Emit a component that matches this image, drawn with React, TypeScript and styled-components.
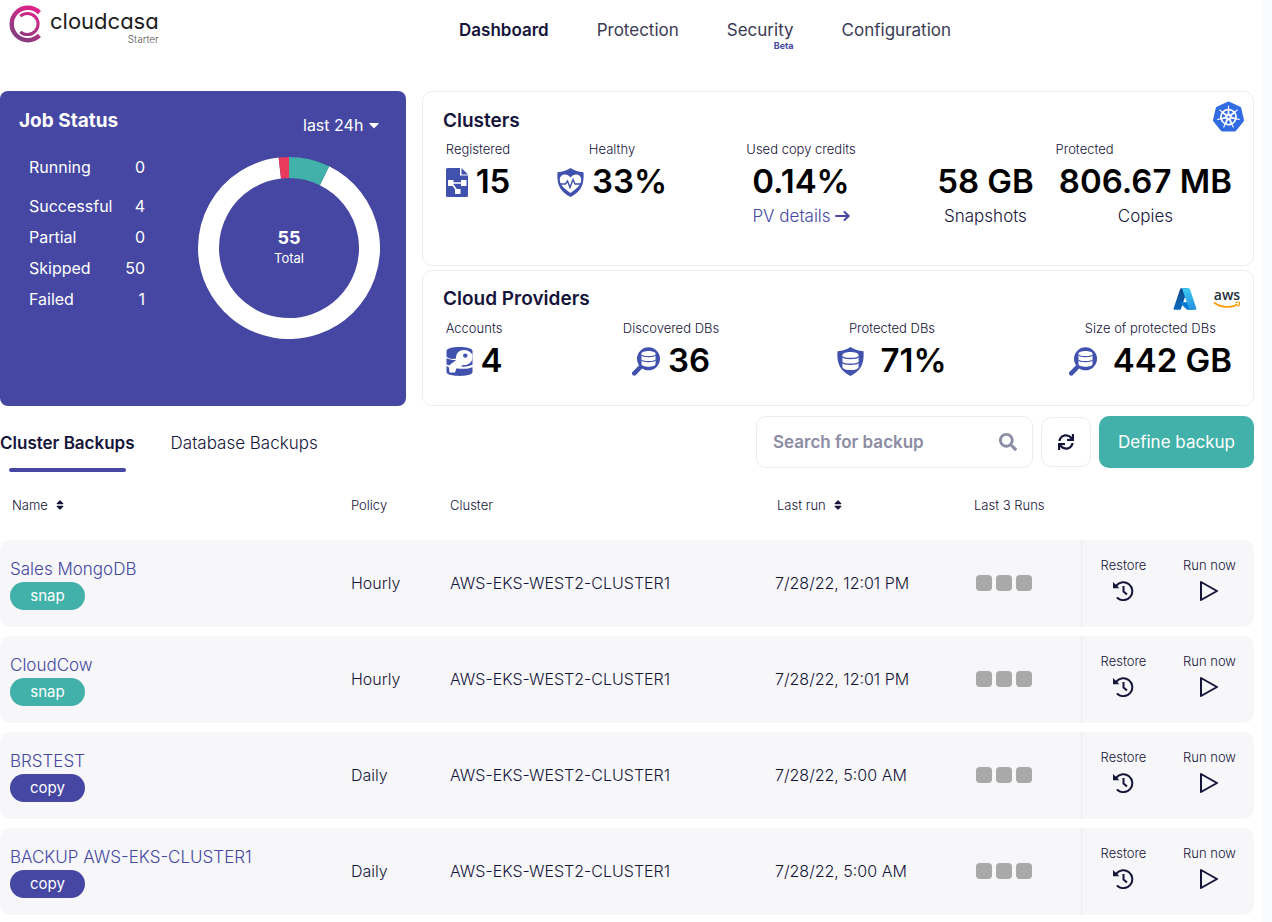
import React from "react";
import styled, { createGlobalStyle } from "styled-components";
import { FaCaretDown, FaSearch, FaSort, FaSync } from "react-icons/fa";
import { SiKubernetes } from "react-icons/si";

const colors = {
  indigo: "#4547a3",
  icon: "#4151ae",
  teal: "#41b1a9",
  red: "#ea3a5b",
  ink: "#15143a",
  muted: "#8c8ca4",
  line: "#ededed",
  row: "#f7f7f9",
};

const GlobalStyle = createGlobalStyle`
  * { box-sizing: border-box; }
  body {
    margin: 0;
    background: #fafbff;
    color: ${colors.ink};
    font-family: Inter, "Liberation Sans", sans-serif;
    font-size: 16px;
    font-weight: 300;
  }
  button, input, select { font: inherit; color: inherit; }
  button { cursor: pointer; }
  a { color: inherit; text-decoration: none; }
  h2, dl, dd, p { margin: 0; }
`;

const Page = styled.div`
  min-height: 100vh;
  margin-right: 10px;
  padding-right: 8px;
  background: #fff;
`;

const Main = styled.main`
  display: flow-root;
`;

/* ---------- header ---------- */

const Header = styled.header`
  display: grid;
  grid-template-columns: 459px 1fr;
  height: 91px;
`;

const Brand = styled.a`
  display: flex;
  align-items: flex-start;
  gap: 9px;
  padding: 5px 0 0 9px;
`;

const BrandText = styled.span`
  display: flex;
  flex-direction: column;
  align-items: flex-end;
  padding-top: 4px;
`;

const Wordmark = styled.span`
  font-size: 22px;
  line-height: 24px;
  font-weight: 400;
  font-feature-settings: "cv11";
  color: #1c1c1c;
`;

const Plan = styled.span`
  font-size: 10px;
  line-height: 12px;
  color: #555;
`;

const Nav = styled.nav`
  display: flex;
  align-items: flex-start;
  gap: 48px;
  padding-top: 18px;
  font-size: 17px;
`;

const NavLink = styled.a<{ $active?: boolean }>`
  position: relative;
  line-height: 24px;
  font-weight: ${(p) => (p.$active ? 600 : 400)};
  color: ${(p) => (p.$active ? colors.ink : "#3a3a55")};
`;

const Beta = styled.span`
  position: absolute;
  right: 0;
  top: 22px;
  font-size: 9px;
  line-height: 12px;
  font-weight: 700;
  color: ${colors.indigo};
`;

/* ---------- summary ---------- */

const Summary = styled.section`
  display: grid;
  grid-template-columns: 406fr 832fr;
  gap: 16px;
`;

const JobCard = styled.section`
  background: ${colors.indigo};
  color: #fff;
  border-radius: 8px;
`;

const JobHead = styled.div`
  display: flex;
  justify-content: space-between;
  height: 56px;
  padding: 18px 24px 0 19px;
`;

const JobTitle = styled.h2`
  font-size: 19px;
  line-height: 24px;
  font-weight: 700;
`;

const Period = styled.label`
  display: flex;
  align-items: center;
  gap: 2px;
  height: 24px;
  margin-top: 4px;
`;

const PeriodSelect = styled.select`
  appearance: none;
  padding: 0;
  border: 0;
  background: transparent;
  font-weight: 400;
`;

const JobBody = styled.div`
  display: flex;
  justify-content: space-between;
  padding: 5px 26px 0 29px;
`;

const JobList = styled.dl`
  width: 116px;
  font-weight: 400;
  line-height: 31px;
`;

const JobRow = styled.div<{ $spaced?: boolean }>`
  display: flex;
  justify-content: space-between;
  margin-bottom: ${(p) => (p.$spaced ? 8 : 0)}px;
`;

const Donut = styled.svg`
  width: 182px;
  height: 182px;
  margin-top: 5px;
`;

const Stats = styled.div`
  display: grid;
  gap: 4px;
`;

const Card = styled.section`
  border: 1px solid ${colors.line};
  border-radius: 10px;
  background: #fff;
`;

const CardHead = styled.div<{ $center?: boolean }>`
  display: flex;
  justify-content: space-between;
  align-items: ${(p) => (p.$center ? "center" : "flex-start")};
  margin-top: 9px;
  height: 38px;
  padding: 0 ${(p) => (p.$center ? 12 : 9)}px 0 20px;
`;

const CardTitle = styled.h2`
  font-size: 19px;
  line-height: 40px;
  font-weight: 600;
`;

const Logos = styled.div`
  display: flex;
  align-items: center;
  gap: 16px;
`;

const Metrics = styled.div<{ $cols: string; $bottom: number }>`
  display: grid;
  grid-template-columns: ${(p) => p.$cols};
  padding: 1px 21px ${(p) => p.$bottom}px 13px;
`;

const Metric = styled.div<{ $end?: boolean }>`
  display: flex;
  flex-direction: column;
  align-items: center;
  justify-self: ${(p) => (p.$end ? "end" : "center")};
`;

const MetricLabel = styled.span`
  font-size: 13px;
  line-height: 18px;
  white-space: nowrap;
`;

const MetricValue = styled.span<{ $gap?: number }>`
  display: flex;
  align-items: center;
  gap: ${(p) => p.$gap ?? 8}px;
  margin-top: 4px;
  font-size: 33px;
  line-height: 38px;
  font-weight: 600;
  color: #000;
  white-space: nowrap;
  svg {
    margin-top: 3px;
  }
`;

const MetricNote = styled.span`
  margin-top: 4px;
  font-size: 17px;
  line-height: 24px;
`;

const DetailsLink = styled.a`
  display: flex;
  align-items: center;
  gap: 4px;
  margin-top: 4px;
  font-size: 17px;
  line-height: 24px;
  color: ${colors.indigo};
`;

const Pair = styled.div`
  display: flex;
  gap: 25px;
`;

const PairItem = styled.div`
  display: flex;
  flex-direction: column;
  align-items: center;
`;

/* ---------- toolbar ---------- */

const Toolbar = styled.div`
  display: flex;
  justify-content: space-between;
  margin-top: 10px;
  font-size: 17px;
`;

const Tabs = styled.div`
  display: flex;
  gap: 36px;
`;

const Tab = styled.button<{ $active?: boolean }>`
  display: flex;
  flex-direction: column;
  padding: 2px 0 0;
  border: 0;
  background: none;
  line-height: 50px;
  font-weight: ${(p) => (p.$active ? 600 : 300)};
  &::after {
    content: "";
    align-self: stretch;
    height: 4px;
    margin: 0 9px;
    border-radius: 2px;
    background: ${(p) => (p.$active ? colors.indigo : "transparent")};
  }
`;

const Tools = styled.div`
  display: flex;
  align-items: center;
  gap: 8px;
  height: 52px;
`;

const SearchBox = styled.label`
  display: flex;
  align-items: center;
  width: 277px;
  height: 52px;
  padding: 0 15px 0 16px;
  border: 1px solid ${colors.line};
  border-radius: 10px;
  color: ${colors.muted};
`;

const SearchInput = styled.input`
  flex: 1;
  min-width: 0;
  padding: 0;
  border: 0;
  outline: 0;
  background: none;
  font-weight: 600;
  &::placeholder {
    color: ${colors.muted};
    opacity: 1;
  }
`;

const RefreshButton = styled.button`
  display: grid;
  place-items: center;
  width: 50px;
  height: 50px;
  padding: 0;
  border: 1px solid ${colors.line};
  border-radius: 10px;
  background: #fff;
`;

const DefineButton = styled.button`
  width: 155px;
  height: 52px;
  padding: 0;
  border: 0;
  border-radius: 10px;
  background: ${colors.teal};
  color: #fff;
  font-weight: 400;
`;

/* ---------- table ---------- */

const Table = styled.table`
  width: 100%;
  margin-bottom: -9px;
  table-layout: fixed;
  border-collapse: separate;
  border-spacing: 0 9px;
`;

const Th = styled.th<{ $width?: number }>`
  width: ${(p) => (p.$width ? `${p.$width}px` : "auto")};
  height: 50px;
  padding: 0 0 2px 10px;
  text-align: left;
  font-size: 13px;
  font-weight: 300;
`;

const SortButton = styled.button`
  display: flex;
  align-items: center;
  gap: 6px;
  padding: 0 2px;
  border: 0;
  background: none;
`;

const Td = styled.td`
  height: 87px;
  padding: 0 0 2px 10px;
  background: ${colors.row};
  white-space: nowrap;
  &:first-child {
    border-radius: 10px 0 0 10px;
  }
`;

const ActionTd = styled.td<{ $divided?: boolean }>`
  padding: 0 0 12px;
  background: ${colors.row};
  border-left: ${(p) => (p.$divided ? "1px solid #ececf0" : "0")};
  text-align: center;
  &:last-child {
    border-radius: 0 10px 10px 0;
  }
`;

const NameLink = styled.a`
  display: block;
  font-size: 17px;
  line-height: 26px;
  color: ${colors.indigo};
`;

const Tag = styled.span<{ $kind: "snap" | "copy" }>`
  display: inline-block;
  vertical-align: top;
  min-width: 75px;
  padding: 0 20px;
  border-radius: 14px;
  background: ${(p) => (p.$kind === "snap" ? colors.teal : colors.indigo)};
  color: #fff;
  font-size: 15px;
  line-height: 28px;
  font-weight: 400;
  text-align: center;
`;

const Runs = styled.span`
  display: flex;
  gap: 4px;
  padding-left: 2px;
`;

const Run = styled.i`
  width: 16px;
  height: 16px;
  border-radius: 4px;
  background: #a9a9a9;
`;

const ActionButton = styled.button`
  display: inline-flex;
  flex-direction: column;
  align-items: center;
  gap: 7px;
  padding: 0;
  border: 0;
  background: none;
  font-size: 13px;
  line-height: 18px;
  white-space: nowrap;
`;

/* ---------- drawings ---------- */

const BrandMark = () => (
  <svg width="32" height="38" viewBox="0 0 32 38" fill="none">
    <defs>
      <linearGradient id="brand" x1="28" y1="2" x2="6" y2="36" gradientUnits="userSpaceOnUse">
        <stop offset="0" stopColor="#e4208c" />
        <stop offset="0.45" stopColor="#b92f84" />
        <stop offset="1" stopColor="#7b4080" />
      </linearGradient>
    </defs>
    <path d="M30.4 7.6A16.2 16.2 0 1 0 30.4 30.4" stroke="url(#brand)" strokeWidth="4.400" />
    <path d="M11.300 11.200A10.600 10.600 0 1 1 11.300 26.800" stroke="url(#brand)" strokeWidth="3" />
  </svg>
);

const FileDiagramIcon = () => (
  <svg width="22" height="29" viewBox="0 0 22 29">
    <path d="M0 1.5Q0 0 1.5 0H14V7.5H22V27.5Q22 29 20.5 29H1.5Q0 29 0 27.5Z" fill={colors.icon} />
    <path d="M15.5 0L22 6.4H15.5Z" fill={colors.icon} />
    <g fill="#fff">
      <rect x="2" y="12" width="5.5" height="6" />
      <rect x="15" y="12" width="5.5" height="6" />
      <rect x="9" y="21" width="5.5" height="5" />
    </g>
    <path d="M7 15H15M7 17L10.5 22" stroke="#fff" strokeWidth="1.6" />
  </svg>
);

const shieldPath = "M13.500 0C16.500 2.300 21 3.800 26.500 4.200C27.300 15 25 23.500 13.500 29C2 23.500-.300 15 .500 4.200C6 3.800 10.500 2.300 13.500 0Z";

const HeartShieldIcon = () => (
  <svg width="27" height="29" viewBox="0 0 27 29">
    <path d={shieldPath} fill={colors.icon} />
    <path
      d="M13.5 25C8 21 2.800 17.500 2.800 11.500C2.800 6 10 4.500 13.500 9.500C17 4.500 24.200 6 24.200 11.500C24.200 17.500 19 21 13.500 25Z"
      fill="#fff"
    />
    <path d="M2 16H8.500L10.500 13L13 19.500L16 11.500L18 16H25" fill="none" stroke={colors.icon} strokeWidth="1.4" />
  </svg>
);

const Cylinder = ({ x, y }: { x: number; y: number }) => (
  <g transform={`translate(${x} ${y})`}>
    <path d="M0 2.800C0 -.800 14 -.800 14 2.800V13.200C14 16.800 0 16.800 0 13.200Z" fill="#fff" />
    <path
      d="M0 4.200C1.500 6.400 12.500 6.400 14 4.200M0 9.200C1.500 11.400 12.500 11.400 14 9.200"
      fill="none"
      stroke={colors.icon}
      strokeWidth="1.2"
    />
  </g>
);

const DbShieldIcon = () => (
  <svg width="27" height="29" viewBox="0 0 27 29">
    <path d={shieldPath} fill={colors.icon} />
    <g transform="translate(-2 -1.500) scale(1.150)">
      <Cylinder x={6.5} y={5.5} />
    </g>
  </svg>
);

const DbSearchIcon = () => (
  <svg width="28" height="29" viewBox="0 0 28 29">
    <path d="M8 20.500L2.300 26.300" stroke={colors.icon} strokeWidth="4.600" strokeLinecap="round" />
    <circle cx="16.500" cy="11.800" r="11.500" fill={colors.icon} />
    <Cylinder x={9.5} y={3.8} />
  </svg>
);

const DbKeyIcon = () => (
  <svg width="27" height="29" viewBox="0 0 27 29">
    <path d="M.500 4C.500-1.200 26.500-1.200 26.500 4V25C26.500 30.200 .500 30.200 .500 25Z" fill={colors.icon} />
    <path
      d="M0 9.500C3 12 7.500 12.500 10 11.500C9.500 6 14 2.700 18.500 3C22.500 3.300 25.500 5.500 26.500 8V10C26.500 15.500 22 18.500 17.500 18C16 18.300 15.500 18.500 15 19.500C19.500 20 24 19 27 17.500V20C22.500 22 15.500 22.200 10.500 21.300L9 25.500H3.500L3 20.500L0 18.500V17.300L3 18.500L10.500 12.800C6.500 13.500 2.500 12.500 0 10.800Z"
      fill="#fff"
    />
    <circle cx="19.300" cy="8.600" r="2.200" fill={colors.icon} />
  </svg>
);

const AzureLogo = () => (
  <svg width="24" height="24" viewBox="2 2 92 92">
    <defs>
      <linearGradient id="azDark" x1="46" y1="10" x2="20" y2="88" gradientUnits="userSpaceOnUse">
        <stop offset="0" stopColor="#114a8b" />
        <stop offset="1" stopColor="#0669bc" />
      </linearGradient>
      <linearGradient id="azLight" x1="48" y1="8" x2="76" y2="88" gradientUnits="userSpaceOnUse">
        <stop offset="0" stopColor="#3ccbf4" />
        <stop offset="1" stopColor="#2892df" />
      </linearGradient>
    </defs>
    <path fill="url(#azDark)" d="M33.338 6.544h26.038l-27.030 80.087a4.152 4.152 0 0 1-3.933 2.824H8.149a4.145 4.145 0 0 1-3.928-5.470L29.404 9.368a4.152 4.152 0 0 1 3.934-2.825z" />
    <path fill="#0078d4" d="M71.175 60.261h-41.290a1.911 1.911 0 0 0-1.305 3.309l26.532 24.764a4.171 4.171 0 0 0 2.846 1.121h23.380z" />
    <path fill="url(#azLight)" d="M66.595 9.364a4.145 4.145 0 0 0-3.928-2.820H33.648a4.146 4.146 0 0 1 3.928 2.820l25.184 74.620a4.146 4.146 0 0 1-3.928 5.472h29.020a4.146 4.146 0 0 0 3.927-5.472z" />
  </svg>
);

const AwsLogo = () => (
  <svg width="28" height="32" viewBox="0 0 28 32">
    <text x="14" y="17" textAnchor="middle" fontSize="14" fontWeight="600" fontFamily="Open Sans, sans-serif" fill="#252f3e">
      aws
    </text>
    <path d="M1 19.500C8 25 18 25 24.500 21.500" fill="none" stroke="#ff9900" strokeWidth="1.800" />
    <path d="M22.500 19.700C24 19 26 19 26.500 19.500C26.800 20.500 26 22.500 25 23.500" fill="none" stroke="#ff9900" strokeWidth="1.200" />
  </svg>
);

const ArrowIcon = () => (
  <svg width="15" height="12" viewBox="0 0 15 12" fill="none" stroke="currentColor" strokeWidth="2" strokeLinecap="round" strokeLinejoin="round">
    <path d="M1 6H13.500M9.500 2L13.700 6L9.500 10" />
  </svg>
);

const RestoreIcon = () => (
  <svg width="22" height="20" viewBox="0 0 22 20" fill="none" stroke={colors.ink} strokeWidth="2">
    <path d="M4.300 4.500A9 9 0 1 1 5.500 17" strokeLinecap="round" />
    <path d="M11.500 5V10.500L15 13.500" />
    <path d="M1 1V7.300H7.300L5.500 5.300L3 3Z" fill={colors.ink} stroke="none" />
  </svg>
);

const PlayIcon = () => (
  <svg width="20" height="20" viewBox="0 0 20 20" fill="none" stroke={colors.ink} strokeWidth="2" strokeLinejoin="round">
    <path d="M2 1L18 10L2 19Z" />
  </svg>
);

const ringArc = (from: number, to: number) => {
  const point = (share: number) => {
    const a = share * 2 * Math.PI;
    return `${91 + 80.5 * Math.sin(a)} ${91 - 80.5 * Math.cos(a)}`;
  };
  return `M${point(from)}A80.5 80.5 0 ${to - from > 0.5 ? 1 : 0} 1 ${point(to)}`;
};

/* ---------- data ---------- */

const jobs: [string, number][] = [
  ["Running", 0],
  ["Successful", 4],
  ["Partial", 0],
  ["Skipped", 50],
  ["Failed", 1],
];

type Backup = { name: string; kind: "snap" | "copy"; policy: string; cluster: string; lastRun: string };

const backups: Backup[] = [
  { name: "Sales MongoDB", kind: "snap", policy: "Hourly", cluster: "AWS-EKS-WEST2-CLUSTER1", lastRun: "7/28/22, 12:01 PM" },
  { name: "CloudCow", kind: "snap", policy: "Hourly", cluster: "AWS-EKS-WEST2-CLUSTER1", lastRun: "7/28/22, 12:01 PM" },
  { name: "BRSTEST", kind: "copy", policy: "Daily", cluster: "AWS-EKS-WEST2-CLUSTER1", lastRun: "7/28/22, 5:00 AM" },
  { name: "BACKUP AWS-EKS-CLUSTER1", kind: "copy", policy: "Daily", cluster: "AWS-EKS-WEST2-CLUSTER1", lastRun: "7/28/22, 5:00 AM" },
];

export default function App() {
  return (
    <>
      <GlobalStyle />
      <Page>
        <Header>
          <Brand href="#">
            <BrandMark />
            <BrandText>
              <Wordmark>cloudcasa</Wordmark>
              <Plan>Starter</Plan>
            </BrandText>
          </Brand>
          <Nav>
            <NavLink href="#dashboard" $active>Dashboard</NavLink>
            <NavLink href="#protection">Protection</NavLink>
            <NavLink href="#security">
              Security<Beta>Beta</Beta>
            </NavLink>
            <NavLink href="#configuration">Configuration</NavLink>
          </Nav>
        </Header>

        <Main>
          <Summary>
            <JobCard>
              <JobHead>
                <JobTitle>Job Status</JobTitle>
                <Period>
                  <PeriodSelect aria-label="Period">
                    <option>last 24h</option>
                  </PeriodSelect>
                  <FaCaretDown size={16} />
                </Period>
              </JobHead>
              <JobBody>
                <JobList>
                  {jobs.map(([label, count]) => (
                    <JobRow key={label} $spaced={label === "Running"}>
                      <dt>{label}</dt>
                      <dd>{count}</dd>
                    </JobRow>
                  ))}
                </JobList>
                <Donut viewBox="0 0 182 182" fill="none" strokeWidth="21">
                  <path d={ringArc(4 / 55, 54 / 55)} stroke="#fff" />
                  <path d={ringArc(0, 4 / 55)} stroke={colors.teal} />
                  <path d={ringArc(54 / 55, 1)} stroke={colors.red} />
                  <text x="91" y="87" textAnchor="middle" fontSize="18" fontWeight="700" fill="#fff">55</text>
                  <text x="91" y="106" textAnchor="middle" fontSize="13" fontWeight="400" fill="#fff">Total</text>
                </Donut>
              </JobBody>
            </JobCard>

            <Stats>
              <Card>
                <CardHead>
                  <CardTitle>Clusters</CardTitle>
                  <SiKubernetes size={31} color="#326ce5" />
                </CardHead>
                <Metrics $cols="84fr 184fr 194fr 334fr" $bottom={37}>
                  <Metric>
                    <MetricLabel>Registered</MetricLabel>
                    <MetricValue><FileDiagramIcon />15</MetricValue>
                  </Metric>
                  <Metric>
                    <MetricLabel>Healthy</MetricLabel>
                    <MetricValue><HeartShieldIcon />33%</MetricValue>
                  </Metric>
                  <Metric>
                    <MetricLabel>Used copy credits</MetricLabel>
                    <MetricValue>0.14%</MetricValue>
                    <DetailsLink href="#pv">PV details<ArrowIcon /></DetailsLink>
                  </Metric>
                  <Metric $end>
                    <MetricLabel>Protected</MetricLabel>
                    <Pair>
                      <PairItem>
                        <MetricValue>58 GB</MetricValue>
                        <MetricNote>Snapshots</MetricNote>
                      </PairItem>
                      <PairItem>
                        <MetricValue>806.67 MB</MetricValue>
                        <MetricNote>Copies</MetricNote>
                      </PairItem>
                    </Pair>
                  </Metric>
                </Metrics>
              </Card>

              <Card>
                <CardHead $center>
                  <CardTitle>Cloud Providers</CardTitle>
                  <Logos><AzureLogo /><AwsLogo /></Logos>
                </CardHead>
                <Metrics $cols="76fr 318fr 124fr 278fr" $bottom={26}>
                  <Metric>
                    <MetricLabel>Accounts</MetricLabel>
                    <MetricValue><DbKeyIcon />4</MetricValue>
                  </Metric>
                  <Metric>
                    <MetricLabel>Discovered DBs</MetricLabel>
                    <MetricValue><DbSearchIcon />36</MetricValue>
                  </Metric>
                  <Metric>
                    <MetricLabel>Protected DBs</MetricLabel>
                    <MetricValue $gap={16}><DbShieldIcon />71%</MetricValue>
                  </Metric>
                  <Metric $end>
                    <MetricLabel>Size of protected DBs</MetricLabel>
                    <MetricValue $gap={16}><DbSearchIcon />442 GB</MetricValue>
                  </Metric>
                </Metrics>
              </Card>
            </Stats>
          </Summary>

          <Toolbar>
            <Tabs>
              <Tab $active>Cluster Backups</Tab>
              <Tab>Database Backups</Tab>
            </Tabs>
            <Tools>
              <SearchBox>
                <SearchInput type="search" aria-label="Search for backup" placeholder="Search for backup" />
                <FaSearch size={18} />
              </SearchBox>
              <RefreshButton aria-label="Refresh"><FaSync size={16} /></RefreshButton>
              <DefineButton>Define backup</DefineButton>
            </Tools>
          </Toolbar>

          <Table>
            <thead>
              <tr>
                <Th><SortButton>Name<FaSort size={12} /></SortButton></Th>
                <Th $width={99}>Policy</Th>
                <Th $width={325}>Cluster</Th>
                <Th $width={199}><SortButton>Last run<FaSort size={12} /></SortButton></Th>
                <Th $width={117}>Last 3 Runs</Th>
                <Th $width={84} aria-label="Restore" />
                <Th $width={89} aria-label="Run now" />
              </tr>
            </thead>
            <tbody>
              {backups.map((b) => (
                <tr key={b.name}>
                  <Td>
                    <NameLink href="#backup">{b.name}</NameLink>
                    <Tag $kind={b.kind}>{b.kind}</Tag>
                  </Td>
                  <Td>{b.policy}</Td>
                  <Td>{b.cluster}</Td>
                  <Td>{b.lastRun}</Td>
                  <Td><Runs><Run /><Run /><Run /></Runs></Td>
                  <ActionTd $divided>
                    <ActionButton>Restore<RestoreIcon /></ActionButton>
                  </ActionTd>
                  <ActionTd>
                    <ActionButton>Run now<PlayIcon /></ActionButton>
                  </ActionTd>
                </tr>
              ))}
            </tbody>
          </Table>
        </Main>
      </Page>
    </>
  );
}
